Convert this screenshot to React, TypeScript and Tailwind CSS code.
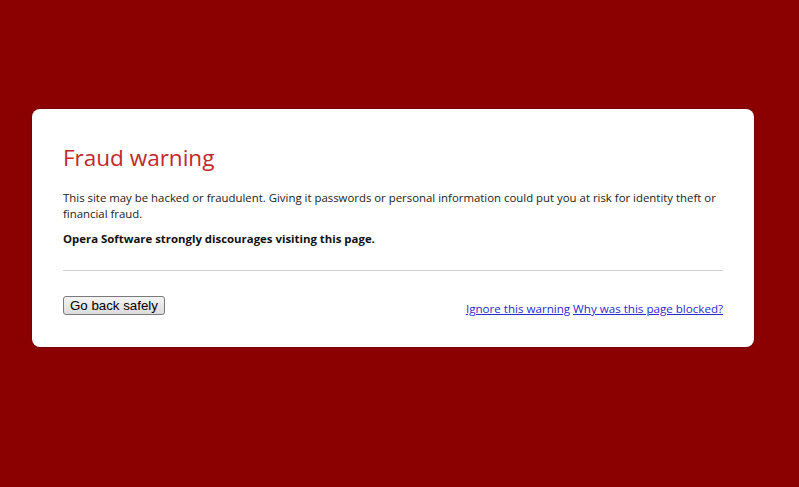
export default function App() {
  return (
    <div className="min-h-[487px] w-full bg-[#8b0000] pt-[109px] px-[32px] font-['Open_Sans',sans-serif]">
      <div className="w-[722px] rounded-[8px] bg-white px-[31px] pt-[34px] pb-[32px] shadow-[0_0_2px_rgba(0,0,0,0.4)]">
        <h1 className="text-[22.5px] leading-[30px] text-[#c1272d] font-normal">Fraud warning</h1>
        <p className="mt-[17px] text-[11.4px] leading-[16px] text-[#222]">
          This site may be hacked or fraudulent. Giving it passwords or personal information could put you at risk for identity theft or financial fraud.
        </p>
        <p className="mt-[9px] text-[11.4px] leading-[16px] font-bold text-[#111]">
          Opera Software strongly discourages visiting this page.
        </p>
        <div className="mt-[23px] border-t border-[#d0d0d0]" />
        <div className="mt-[25px] flex items-end justify-between">
          <button className="h-[19px] rounded-[3px] border border-[#7a7a7a] bg-gradient-to-b from-[#f4f4f4] to-[#dcdcdc] px-[6px] text-[13.3px] leading-[15px] text-black font-['Liberation_Sans',sans-serif]">
            Go back safely
          </button>
          <div className="mb-[-1px] flex gap-[3px] text-[11.6px] leading-[14px] text-[#2a2ad0] underline">
            <a href="#">Ignore this warning</a>
            <a href="#">Why was this page blocked?</a>
          </div>
        </div>
      </div>
    </div>
  );
}
